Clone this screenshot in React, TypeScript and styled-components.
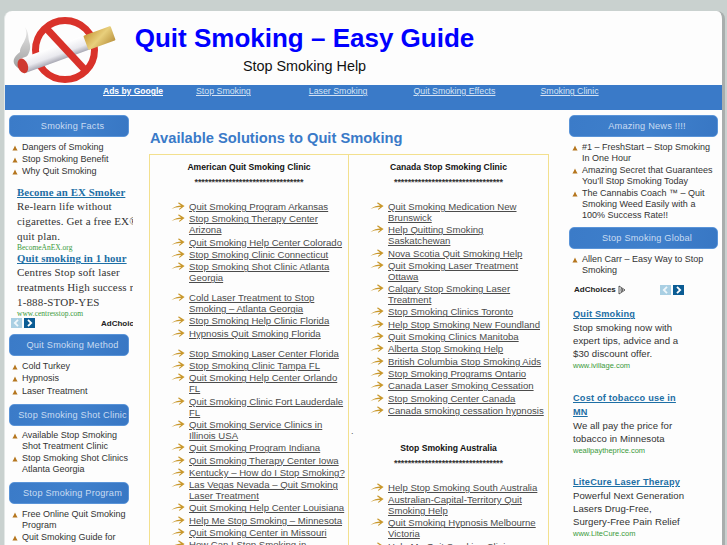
import React from 'react';
import styled, { createGlobalStyle } from 'styled-components';

const GlobalStyle = createGlobalStyle`
  html, body {
    margin: 0;
    padding: 0;
    height: 545px;
    overflow: hidden;
    background-color: #c9d1cf;
    font-family: "Liberation Sans", Arial, sans-serif;
  }
`;

const Wrapper = styled.div`
  margin: 11px 2px 0 4px;
  height: 534px;
  overflow: hidden;
  background-color: #fdfdfd;
  border-radius: 8px 8px 0 0;
  border-left: 1px solid #e4e8e7;
  border-right: 3px solid #a9aead;
`;

const Header = styled.div`
  display: flex;
  height: 74px;
`;

const LogoBox = styled.div`
  width: 129px;
  flex-shrink: 0;
`;

const Titles = styled.div`
  width: 341px;
  text-align: center;
`;

const SiteTitle = styled.h1`
  margin: 12px 0 0;
  font-size: 26px;
  line-height: 30px;
  font-weight: bold;
  color: #0000ff;
  white-space: nowrap;
`;

const SubTitle = styled.div`
  margin-top: 4px;
  font-size: 14.4px;
  line-height: 18px;
  color: #111;
`;

const Nav = styled.div`
  display: flex;
  height: 25px;
  padding: 1px 0 0 98px;
  box-sizing: border-box;
  background-color: #3a7ac8;
`;

const NavLink = styled.a<{ $gap: number; $bold?: boolean }>`
  margin-right: ${p => p.$gap}px;
  font-size: ${p => (p.$bold ? 8.5 : 8.8)}px;
  line-height: 10px;
  color: ${p => (p.$bold ? '#fff' : '#d5e3f4')};
  font-weight: ${p => (p.$bold ? 'bold' : 'normal')};
  text-decoration: underline;
  white-space: nowrap;
`;

const Columns = styled.div`
  display: grid;
  grid-template-columns: 120px 400px 149px;
  column-gap: 20px;
  padding: 5px 0 0 4px;
`;

const Side = styled.div`
  min-width: 0;
`;

const SideHeading = styled.div`
  height: 22px;
  box-sizing: border-box;
  padding-left: 7px;
  border: 1px solid #5a94d8;
  border-radius: 5px;
  background: linear-gradient(100deg, #3b7bc8, #3f80cc 55%, #3877c4);
  color: #c9dcf2;
  font-size: 9.2px;
  line-height: 20px;
  text-align: center;
  white-space: nowrap;
  letter-spacing: 0.2px;
`;

const SideList = styled.ul<{ $bottom?: number }>`
  list-style: none;
  margin: 4.5px 0 ${p => p.$bottom ?? 7}px;
  padding: 0;
`;

const SideItem = styled.li`
  display: flex;
  font-size: 9px;
  line-height: 11px;
  margin-bottom: 1.4px;
  color: #333;
`;

const BulletBox = styled.span`
  width: 13px;
  height: 11px;
  flex-shrink: 0;
  padding: 3px 0 0 3px;
  box-sizing: border-box;
  line-height: 0;
`;

const LeftAds = styled.div`
  width: 122px;
  margin: 8px 0 0 2px;
  overflow: hidden;
  white-space: nowrap;
  font-family: "Liberation Serif", "Times New Roman", serif;
`;

const SerifAdBlock = styled.div`
  margin-bottom: -1px;
  padding-left: 6px;
`;

const SerifAdTitle = styled.a`
  display: block;
  font-size: 10.8px;
  line-height: 14px;
  font-weight: bold;
  color: #1d6fa5;
  text-decoration: underline;
  letter-spacing: 0.1px;
`;

const SerifAdLine = styled.div`
  font-size: 11px;
  line-height: 15px;
  color: #333;
  letter-spacing: 0.15px;
`;

const SerifAdUrl = styled.div`
  font-size: 7.5px;
  line-height: 8px;
  color: #3a9a3a;
`;

const AdNavRow = styled.div`
  display: flex;
  align-items: center;
  height: 10px;
  margin: 1px 0 6px;
`;

const ArrowButton = styled.span<{ $dim?: boolean; $left?: number }>`
  display: flex;
  flex-shrink: 0;
  align-items: center;
  justify-content: center;
  width: 11px;
  height: 10px;
  margin-left: ${p => p.$left ?? 0}px;
  margin-right: 2px;
  background-color: ${p => (p.$dim ? '#a9cfe3' : '#0b5c94')};
`;

const AdChoicesLabel = styled.span<{ $left?: number }>`
  flex-shrink: 0;
  margin-left: ${p => p.$left ?? 0}px;
  font-family: "Liberation Sans", Arial, sans-serif;
  font-size: 8px;
  font-weight: bold;
  color: #222;
  white-space: nowrap;
`;

const Main = styled.div`
  min-width: 0;
`;

const MainTitle = styled.h2`
  margin: 14px 0 6px 1px;
  font-size: 14.7px;
  line-height: 19px;
  font-weight: bold;
  color: #3a7ac8;
`;

const LinkTable = styled.div`
  display: grid;
  grid-template-columns: 199px 1fr;
  border: 1px solid #f3e08e;
`;

const LinkColumn = styled.div<{ $divider?: boolean }>`
  position: relative;
  padding: 6px 0 0;
  min-height: 420px;
  border-right: ${p => (p.$divider ? '1px solid #f3e08e' : 'none')};
`;

const GroupTitle = styled.div<{ $top?: number }>`
  margin-top: ${p => p.$top ?? 0}px;
  text-align: center;
  font-size: 8.6px;
  line-height: 12px;
  font-weight: bold;
  color: #111;
`;

const Stars = styled.div`
  margin-top: 3px;
  text-align: center;
  font-size: 9px;
  line-height: 12px;
  font-weight: bold;
  color: #333;
  letter-spacing: -0.1px;
  white-space: nowrap;
`;

const LinkList = styled.ul<{ $top?: number }>`
  list-style: none;
  margin: ${p => p.$top ?? 0}px 0 0;
  padding: 0 2px 0 21px;
`;

const LinkItem = styled.li`
  display: flex;
  margin-bottom: 1.3px;
  font-size: 9.6px;
  line-height: 11px;
`;

const ArrowBox = styled.span`
  width: 18px;
  height: 11px;
  flex-shrink: 0;
  padding-top: 1px;
  box-sizing: border-box;
  line-height: 0;
`;

const TextLink = styled.a`
  color: #4c4c4c;
  text-decoration: underline;
`;

const Dot = styled.div`
  height: 14px;
  margin: 8px 0 0 2px;
  font-size: 9px;
  line-height: 14px;
  color: #555;
`;

const RightAds = styled.div`
  margin-left: 4px;
`;

const AdChoicesRow = styled.div`
  display: flex;
  align-items: center;
  height: 12px;
  margin: 8px 0 11.5px 1px;
`;

const SansAd = styled.div`
  margin-bottom: 19.5px;
`;

const SansAdTitle = styled.a`
  display: block;
  width: 112px;
  font-size: 9.2px;
  line-height: 14px;
  font-weight: bold;
  color: #1d6fa5;
  text-decoration: underline;
  letter-spacing: 0.2px;
`;

const SansAdLine = styled.div`
  font-size: 9.6px;
  line-height: 13px;
  color: #333;
  letter-spacing: 0.05px;
  white-space: nowrap;
`;

const SansAdUrl = styled.div`
  font-size: 7.5px;
  line-height: 11px;
  color: #3a9a3a;
`;

const Bullet = () => (
  <svg width="6" height="6" viewBox="0 0 6 6">
    <path d="M3 0.5 L4.4 3.6 L5.6 5.6 L0.4 5.6 L1.6 3.6 Z" fill="#b5761e" />
  </svg>
);

const GoldArrow = () => (
  <svg width="14" height="9" viewBox="0 0 14 9">
    <path d="M0.3 7.2 C3.5 4.2 7.5 3.6 10 3.4 L6.8 1 L8 0.6 L13.6 4 L8.6 7.8 L7.8 7.2 L10.2 5 C7 4.8 3.5 5.4 0.3 7.2 Z" fill="#c9982c" />
  </svg>
);

const Chevron = ({ left, color }: { left?: boolean; color: string }) => (
  <svg width="7" height="8" viewBox="0 0 7 8">
    <path
      d={left ? 'M5 0.8 L1.8 4 L5 7.2' : 'M2 0.8 L5.2 4 L2 7.2'}
      fill="none"
      stroke={color}
      strokeWidth="1.8"
    />
  </svg>
);

const AdChoicesIcon = () => (
  <svg width="8" height="10" viewBox="0 0 8 10" style={{ marginLeft: 2 }}>
    <path d="M1 1 L7 5 L1 9 Z M3 3.4 L3 6.6 L5 5 Z" fill="none" stroke="#333" strokeWidth="0.8" />
  </svg>
);

const NoSmokingLogo = () => (
  <svg width="115" height="74" viewBox="0 0 115 74">
    <defs>
      <linearGradient id="paper" x1="0" y1="0" x2="0" y2="1">
        <stop offset="0" stopColor="#ffffff" />
        <stop offset="0.6" stopColor="#e9e9ee" />
        <stop offset="1" stopColor="#a9a9b4" />
      </linearGradient>
      <linearGradient id="filter" x1="0" y1="0" x2="1" y2="1">
        <stop offset="0" stopColor="#c99a3a" />
        <stop offset="0.5" stopColor="#e8cf7c" />
        <stop offset="1" stopColor="#bb9440" />
      </linearGradient>
      <linearGradient id="smoke" x1="0" y1="0" x2="0" y2="1">
        <stop offset="0" stopColor="#e8e8e8" />
        <stop offset="1" stopColor="#8d8d8d" />
      </linearGradient>
    </defs>
    <path
      d="M20 16 C25 28 15 33 15 41 C8 46 6 52 13 57 C17 59 19 55 18 50 C24 44 27 38 24 30 C23 26 24 22 20 16 Z"
      fill="url(#smoke)"
      opacity="0.85"
    />
    <circle cx="60" cy="39" r="29.5" fill="none" stroke="#d9322a" strokeWidth="7" />
    <g transform="rotate(-20 60 39)">
      <rect x="15" y="32" width="69" height="15" fill="url(#paper)" />
      <rect x="82" y="32" width="29" height="15" rx="1" fill="url(#filter)" />
      <ellipse cx="15" cy="39.5" rx="5" ry="7.5" fill="#cf3a30" />
    </g>
    <path d="M41 17 L81 60" stroke="#d9322a" strokeWidth="7" />
  </svg>
);

const navLinks = [
  { label: 'Ads by Google', gap: 33, bold: true },
  { label: 'Stop Smoking', gap: 58 },
  { label: 'Laser Smoking', gap: 46 },
  { label: 'Quit Smoking Effects', gap: 45 },
  { label: 'Smoking Clinic', gap: 0 },
];

const americanFirst = [
  'Quit Smoking Program Arkansas',
  'Stop Smoking Therapy Center Arizona',
  'Quit Smoking Help Center Colorado',
  'Stop Smoking Clinic Connecticut',
  'Stop Smoking Shot Clinic Atlanta Georgia',
];

const americanSecond = [
  'Cold Laser Treatment to Stop Smoking – Atlanta Georgia',
  'Stop Smoking Help Clinic Florida',
  'Hypnosis Quit Smoking Florida',
];

const americanThird = [
  'Stop Smoking Laser Center Florida',
  'Stop Smoking Clinic Tampa FL',
  'Quit Smoking Help Center Orlando FL',
  'Quit Smoking Clinic Fort Lauderdale FL',
  'Quit Smoking Service Clinics in Illinois USA',
  'Quit Smoking Program Indiana',
  'Quit Smoking Therapy Center Iowa',
  'Kentucky – How do I Stop Smoking?',
  'Las Vegas Nevada – Quit Smoking Laser Treatment',
  'Quit Smoking Help Center Louisiana',
  'Help Me Stop Smoking – Minnesota',
  'Quit Smoking Center in Missouri',
  'How Can I Stop Smoking in',
];

const canada = [
  'Quit Smoking Medication New Brunswick',
  'Help Quitting Smoking Saskatchewan',
  'Nova Scotia Quit Smoking Help',
  'Quit Smoking Laser Treatment Ottawa',
  'Calgary Stop Smoking Laser Treatment',
  'Stop Smoking Clinics Toronto',
  'Help Stop Smoking New Foundland',
  'Quit Smoking Clinics Manitoba',
  'Alberta Stop Smoking Help',
  'British Columbia Stop Smoking Aids',
  'Stop Smoking Programs Ontario',
  'Canada Laser Smoking Cessation',
  'Stop Smoking Center Canada',
  'Canada smoking cessation hypnosis',
];

const australia = [
  'Help Stop Smoking South Australia',
  'Australian-Capital-Territory Quit Smoking Help',
  'Quit Smoking Hypnosis Melbourne Victoria',
  'Help Me Quit Smoking Clinic',
];

const rightAds = [
  {
    title: 'Quit Smoking',
    lines: ['Stop smoking now with', 'expert tips, advice and a', '$30 discount offer.'],
    url: 'www.ivillage.com',
  },
  {
    title: 'Cost of tobacco use in MN',
    lines: ['We all pay the price for', 'tobacco in Minnesota'],
    url: 'weallpaytheprice.com',
  },
  {
    title: 'LiteCure Laser Therapy',
    lines: ['Powerful Next Generation', 'Lasers Drug-Free,', 'Surgery-Free Pain Relief'],
    url: 'www.LiteCure.com',
  },
];

const STARS = '*'.repeat(32);

const SideLinks: React.FC<{ items: string[]; bottom?: number }> = ({ items, bottom }) => (
  <SideList $bottom={bottom}>
    {items.map(item => (
      <SideItem key={item}>
        <BulletBox>
          <Bullet />
        </BulletBox>
        <span>{item}</span>
      </SideItem>
    ))}
  </SideList>
);

const ArrowLinks: React.FC<{ items: string[]; top?: number }> = ({ items, top }) => (
  <LinkList $top={top}>
    {items.map(item => (
      <LinkItem key={item}>
        <ArrowBox>
          <GoldArrow />
        </ArrowBox>
        <TextLink>{item}</TextLink>
      </LinkItem>
    ))}
  </LinkList>
);

const App: React.FC = () => (
  <>
    <GlobalStyle />
    <Wrapper>
      <Header>
        <LogoBox>
          <NoSmokingLogo />
        </LogoBox>
        <Titles>
          <SiteTitle>Quit Smoking – Easy Guide</SiteTitle>
          <SubTitle>Stop Smoking Help</SubTitle>
        </Titles>
      </Header>

      <Nav>
        {navLinks.map(link => (
          <NavLink key={link.label} $gap={link.gap} $bold={link.bold}>
            {link.label}
          </NavLink>
        ))}
      </Nav>

      <Columns>
        <Side>
          <SideHeading>Smoking Facts</SideHeading>
          <SideLinks items={['Dangers of Smoking', 'Stop Smoking Benefit', 'Why Quit Smoking']} bottom={0} />
          <LeftAds>
            <SerifAdBlock>
              <SerifAdTitle>Become an EX Smoker</SerifAdTitle>
              <SerifAdLine>Re-learn life without</SerifAdLine>
              <SerifAdLine>cigarettes. Get a free EX®</SerifAdLine>
              <SerifAdLine>quit plan.</SerifAdLine>
              <SerifAdUrl>BecomeAnEX.org</SerifAdUrl>
            </SerifAdBlock>
            <SerifAdBlock>
              <SerifAdTitle>Quit smoking in 1 hour</SerifAdTitle>
              <SerifAdLine>Centres Stop soft laser</SerifAdLine>
              <SerifAdLine>treatments High success rate</SerifAdLine>
              <SerifAdLine>1-888-STOP-YES</SerifAdLine>
              <SerifAdUrl>www.centresstop.com</SerifAdUrl>
            </SerifAdBlock>
            <AdNavRow>
              <ArrowButton $dim>
                <Chevron left color="#eef6fb" />
              </ArrowButton>
              <ArrowButton>
                <Chevron color="#ffffff" />
              </ArrowButton>
              <AdChoicesLabel $left={64}>AdChoices</AdChoicesLabel>
            </AdNavRow>
          </LeftAds>
          <SideHeading>Quit Smoking Method</SideHeading>
          <SideLinks items={['Cold Turkey', 'Hypnosis', 'Laser Treatment']} />
          <SideHeading>Stop Smoking Shot Clinic</SideHeading>
          <SideLinks
            items={['Available Stop Smoking Shot Treatment Clinic', 'Stop Smoking Shot Clinics Atlanta Georgia']}
          />
          <SideHeading>Stop Smoking Program</SideHeading>
          <SideLinks items={['Free Online Quit Smoking Program', 'Quit Smoking Guide for Women']} />
        </Side>

        <Main>
          <MainTitle>Available Solutions to Quit Smoking</MainTitle>
          <LinkTable>
            <LinkColumn $divider>
              <GroupTitle>American Quit Smoking Clinic</GroupTitle>
              <Stars>{STARS}</Stars>
              <ArrowLinks items={americanFirst} top={13} />
              <ArrowLinks items={americanSecond} top={9} />
              <ArrowLinks items={americanThird} top={9} />
            </LinkColumn>
            <LinkColumn>
              <GroupTitle>Canada Stop Smoking Clinic</GroupTitle>
              <Stars>{STARS}</Stars>
              <ArrowLinks items={canada} top={13} />
              <Dot>.</Dot>
              <GroupTitle $top={4}>Stop Smoking Australia</GroupTitle>
              <Stars>{STARS}</Stars>
              <ArrowLinks items={australia} top={13} />
            </LinkColumn>
          </LinkTable>
        </Main>

        <Side>
          <SideHeading>Amazing News !!!!</SideHeading>
          <SideLinks
            items={[
              '#1 – FreshStart – Stop Smoking In One Hour',
              'Amazing Secret that Guarantees You’ll Stop Smoking Today',
              'The Cannabis Coach ™ – Quit Smoking Weed Easily with a 100% Success Rate!!',
            ]}
            bottom={6}
          />
          <SideHeading>Stop Smoking Global</SideHeading>
          <SideLinks items={['Allen Carr – Easy Way to Stop Smoking']} bottom={0} />
          <RightAds>
            <AdChoicesRow>
              <AdChoicesLabel>AdChoices</AdChoicesLabel>
              <AdChoicesIcon />
              <ArrowButton $dim $left={34}>
                <Chevron left color="#eef6fb" />
              </ArrowButton>
              <ArrowButton>
                <Chevron color="#ffffff" />
              </ArrowButton>
            </AdChoicesRow>
            {rightAds.map(ad => (
              <SansAd key={ad.title}>
                <SansAdTitle>{ad.title}</SansAdTitle>
                {ad.lines.map(line => (
                  <SansAdLine key={line}>{line}</SansAdLine>
                ))}
                <SansAdUrl>{ad.url}</SansAdUrl>
              </SansAd>
            ))}
          </RightAds>
        </Side>
      </Columns>
    </Wrapper>
  </>
);

export default App;
